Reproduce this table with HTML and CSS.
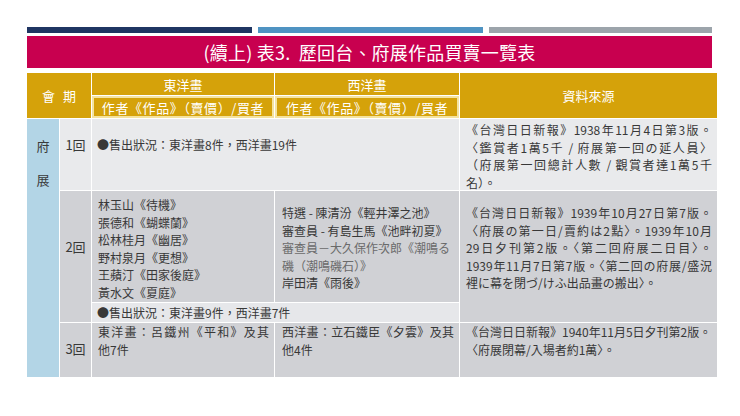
FILE: index.html
```html
<!DOCTYPE html>
<html lang="zh-Hant">
<head>
<meta charset="utf-8">
<title>歷回台、府展作品買賣一覽表</title>
<link rel="stylesheet" href="styles.css">
</head>
<body>
<div class="page">
  <div class="stripes">
    <span class="stripe s1"></span>
    <span class="stripe s2"></span>
    <span class="stripe s3"></span>
  </div>
  <div class="title">(續上) 表3.&nbsp; 歷回台、府展作品買賣一覽表</div>
  <div class="tbl">
    <div class="hd c-period"><span>會</span><span>期</span></div>
    <div class="hd c-east-h">東洋畫</div>
    <div class="hd c-west-h">西洋畫</div>
    <div class="hd c-src-h">資料來源</div>
    <div class="hd sub c-east-s">作者《作品》（賣價）/買者</div>
    <div class="hd sub c-west-s">作者《作品》（賣價）/買者</div>

    <div class="cell fu">府<br>展</div>

    <div class="cell light no n1">1回</div>
    <div class="cell light sale1">●售出狀況：東洋畫8件，西洋畫19件</div>
    <div class="cell light src src1">
      <span class="jl">《台灣日日新報》1938年11月4日第3版。</span>
      <span class="jl">〈鑑賞者1萬5千 / 府展第一回の延人員〉</span>
      <span class="jl">（府展第一回總計人數 / 觀賞者達1萬5千</span>
      <span class="ll">名）。</span>
    </div>

    <div class="cell dark no n2">2回</div>
    <div class="cell dark list e2">
      <span class="ll">林玉山《待機》</span>
      <span class="ll">張德和《蝴蝶蘭》</span>
      <span class="ll">松林桂月《幽居》</span>
      <span class="ll">野村泉月《更想》</span>
      <span class="ll">王蘋汀《田家後庭》</span>
      <span class="ll">黃水文《夏庭》</span>
    </div>
    <div class="cell dark list w2">
      <span class="ll">特選 - 陳清汾《輕井澤之池》</span>
      <span class="ll">審查員 - 有島生馬《池畔初夏》</span>
      <span class="ll faint">審查員－大久保作次郎《潮鳴る</span>
      <span class="ll faint">磯（潮鳴磯石）》</span>
      <span class="ll">岸田清《雨後》</span>
    </div>
    <div class="cell light2 sale2">●售出狀況：東洋畫9件，西洋畫7件</div>
    <div class="cell dark src src2">
      <span class="jl">《台灣日日新報》1939年10月27日第7版。</span>
      <span class="jl">〈府展の第一日/賣約は2點〉。1939年10月</span>
      <span class="jl">29日夕刊第2版。〈第二回府展二日目〉。</span>
      <span class="jl">1939年11月7日第7版。〈第二回の府展/盛況</span>
      <span class="ll">裡に幕を閉づ/けふ出品畫の搬出〉。</span>
    </div>

    <div class="cell dark no n3">3回</div>
    <div class="cell dark list e3">
      <span class="jl">東洋畫：呂鐵州《平和》及其</span>
      <span class="ll">他7件</span>
    </div>
    <div class="cell dark list w3">
      <span class="jl">西洋畫：立石鐵臣《夕雲》及其</span>
      <span class="ll">他4件</span>
    </div>
    <div class="cell dark src src3">
      <span class="ll">《台灣日日新報》1940年11月5日夕刊第2版。</span>
      <span class="ll">〈府展閉幕/入場者約1萬〉。</span>
    </div>
  </div>
</div>
</body>
</html>
```
FILE: styles.css
```css
html, body {
  margin: 0;
  padding: 0;
  background: #ffffff;
}

body {
  font-family: "Noto Sans CJK TC", "Noto Sans", sans-serif;
  color: #383838;
}

.page {
  padding: 27px 0 0 27px;
  width: 690px;
}

.stripes {
  display: flex;
  gap: 6px;
  width: 685px;
  height: 6px;
}

.stripe {
  display: block;
  height: 6px;
}

.s1 { width: 225px; background: #1f3562; }
.s2 { width: 225px; background: #4f93c2; }
.s3 { flex: 1; background: #9ca4ab; }

.title {
  margin-top: 3px;
  width: 685px;
  height: 32px;
  background: #c8004f;
  color: #ffffff;
  font-size: 18px;
  line-height: 32px;
  text-align: center;
  letter-spacing: 0.2px;
}

.tbl {
  margin-top: 5px;
  display: grid;
  grid-template-columns: 32px 31px 182px 184px 257px;
  grid-template-rows: 22px 22px 71px 111px 19px 54px;
  column-gap: 1px;
  row-gap: 1px;
  background: #ffffff;
}

.hd {
  background: #d5a20a;
  color: #ffffff;
  font-size: 13px;
  display: flex;
  align-items: center;
  justify-content: center;
}

.sub {
  box-sizing: border-box;
  border: 2px solid #f4e3a0;
  letter-spacing: 0.6px;
  font-size: 13px;
}

.c-period { grid-column: 1 / 3; grid-row: 1 / 3; gap: 8px; font-size: 13px; }
.c-east-h { grid-column: 3; grid-row: 1; }
.c-west-h { grid-column: 4; grid-row: 1; }
.c-src-h { grid-column: 5; grid-row: 1 / 3; }
.c-east-s { grid-column: 3; grid-row: 2; }
.c-west-s { grid-column: 4; grid-row: 2; }

.cell {
  font-size: 12px;
  line-height: 17.5px;
  box-sizing: border-box;
  overflow: hidden;
}

.light { background: #e9eaec; }
.light2 { background: #e6e7ea; }
.dark { background: #d0d1d5; }

.fu {
  grid-column: 1;
  grid-row: 3 / 7;
  background: #b3d5e6;
  text-align: center;
  font-size: 13px;
  line-height: 34px;
  padding-top: 10px;
  color: #3a3a3a;
}

.no {
  text-align: center;
  font-size: 13px;
}

.n1 { grid-column: 2; grid-row: 3; padding-top: 17px; }
.n2 { grid-column: 2; grid-row: 4 / 6; padding-top: 47px; }
.n3 { grid-column: 2; grid-row: 6; padding-top: 17px; }

.sale1 {
  grid-column: 3 / 5;
  grid-row: 3;
  padding: 17px 0 0 5px;
}

.sale2 {
  grid-column: 3 / 5;
  grid-row: 5;
  padding-left: 5px;
  line-height: 19px;
}

.src {
  padding: 0 5px 0 6px;
}

.src1 { grid-column: 5; grid-row: 3; padding-top: 2px; }
.src2 { grid-column: 5; grid-row: 4 / 6; padding-top: 13px; }
.src3 { grid-column: 5; grid-row: 6; white-space: nowrap; padding-right: 0; }

.list { padding-left: 6px; padding-right: 5px; }
.e2 { grid-column: 3; grid-row: 4; padding-top: 5px; }
.w2 { grid-column: 4; grid-row: 4; padding-top: 13px; padding-left: 7px; }
.e3 { grid-column: 3; grid-row: 6; }
.w3 { grid-column: 4; grid-row: 6; padding-left: 7px; }

.jl {
  display: block;
  text-align: justify;
  text-align-last: justify;
}

.ll {
  display: block;
  white-space: nowrap;
}

.faint { color: #6a6a6a; }
```
